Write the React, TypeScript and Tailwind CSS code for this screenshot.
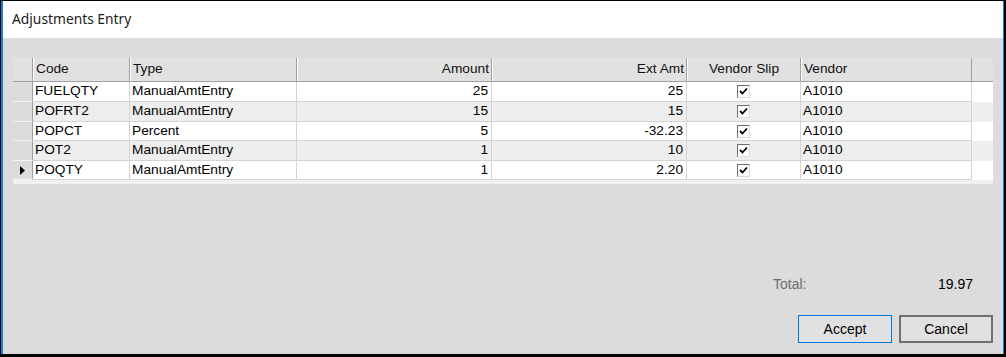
import React from "react";

const rows = [
  { code: "FUELQTY", type: "ManualAmtEntry", amount: "25", ext: "25", vendor: "A1010", h: "h-[20px]" },
  { code: "POFRT2", type: "ManualAmtEntry", amount: "15", ext: "15", vendor: "A1010", h: "h-[20px]" },
  { code: "POPCT", type: "Percent", amount: "5", ext: "-32.23", vendor: "A1010", h: "h-[19px]" },
  { code: "POT2", type: "ManualAmtEntry", amount: "1", ext: "10", vendor: "A1010", h: "h-[20px]" },
  { code: "POQTY", type: "ManualAmtEntry", amount: "1", ext: "2.20", vendor: "A1010", h: "h-[19px]" },
];

function Check() {
  return (
    <span className="inline-flex w-[13px] h-[13px] border border-t-[#6d6d6d] border-l-[#6d6d6d] border-r-[#dcdcdc] border-b-[#dcdcdc] bg-white items-center justify-center">
      <svg width="9" height="9" viewBox="0 0 9 9">
        <path d="M1 4 L3.5 6.5 L8 1.5" stroke="#000" strokeWidth="1.8" fill="none" />
      </svg>
    </span>
  );
}

export default function App() {
  const font = { fontFamily: '"Liberation Sans", Arial, sans-serif' };
  return (
    <div
      className="w-[1006px] h-[357px] flex flex-col bg-black pt-px pl-px pr-[2px] pb-[3px]"
      style={font}
    >
      <div className="flex-1 flex flex-col border-l-2 border-r border-[#1a7bd6] ">
        <div className="h-[37px] bg-white flex items-center pl-[9px]">
          <span className="text-[13.8px] text-[#1b1b1b] mt-[-1px]" style={{ fontFamily: '"Noto Sans", "Open Sans", sans-serif' }}>
            Adjustments Entry
          </span>
        </div>
        <div className="flex-1 bg-[#dcdcdc] flex flex-col pl-[10px] pr-[10px] pt-[20px] pb-[11px]">
          <div className="w-[980px] h-[126px] bg-[#f0f0f0] text-[13.7px] text-black">
            <div className="flex h-[24px] bg-[#e1e1e1] border-b border-[#a0a0a0] text-[#111]">
              <div className="w-[20px] border-r border-[#a0a0a0]" />
              <div className="w-[97px] border-r border-[#a0a0a0] border-l border-l-white pl-[2px] flex items-center">Code</div>
              <div className="w-[167px] border-r border-[#a0a0a0] border-l border-l-white pl-[2px] flex items-center">Type</div>
              <div className="w-[195px] border-r border-[#a0a0a0] border-l border-l-white pr-[2px] flex items-center justify-end">Amount</div>
              <div className="w-[195px] border-r border-[#a0a0a0] border-l border-l-white pr-[2px] flex items-center justify-end">Ext Amt</div>
              <div className="w-[114px] border-r border-[#a0a0a0] border-l border-l-white flex items-center justify-center">Vendor Slip</div>
              <div className="w-[171px] border-r border-[#a0a0a0] border-l border-l-white pl-[2px] flex items-center">Vendor</div>
            </div>
            {rows.map((r, i) => (
              <div key={r.code} className={`flex ${r.h} ${i % 2 === 1 ? "bg-[#eeeeee]" : "bg-white"}`}>
                <div className="w-[20px] bg-[#dcdcdc] border-r border-b border-r-[#a0a0a0] border-b-[#f4f4f4] flex items-center justify-center">
                  {i === 4 && (
                    <svg width="5" height="9" viewBox="0 0 5 9">
                      <path d="M0 0 L5 4.5 L0 9 Z" fill="#000" />
                    </svg>
                  )}
                </div>
                <div className="w-[97px] border-r border-b border-[#d4d4d4] pl-[2px] flex items-center">{r.code}</div>
                <div className="w-[167px] border-r border-b border-[#d4d4d4] pl-[2px] flex items-center">{r.type}</div>
                <div className="w-[195px] border-r border-b border-[#d4d4d4] pr-[3px] flex items-center justify-end">{r.amount}</div>
                <div className="w-[195px] border-r border-b border-[#d4d4d4] pr-[3px] flex items-center justify-end">{r.ext}</div>
                <div className="w-[114px] border-r border-b border-[#d4d4d4] flex items-center justify-center">
                  <Check />
                </div>
                <div className="w-[171px] border-r border-b border-[#d4d4d4] pl-[2px] flex items-center">{r.vendor}</div>
              </div>
            ))}
          </div>
          <div className="flex-1" />
          <div className="flex justify-end pr-[20px] text-[14px]">
            <div className="w-[200px] flex justify-between">
              <span className="text-[#6d6d6d]">Total:</span>
              <span className="text-black">19.97</span>
            </div>
          </div>
          <div className="flex justify-end gap-[7px] mt-[20px]">
            <button className="w-[94px] h-[28px] bg-[#e1e1e1] border border-[#0078d7] text-[14px] text-black">Accept</button>
            <button className="w-[94px] h-[28px] bg-[#e1e1e1] border-2 border-[#707070] text-[14px] text-black">Cancel</button>
          </div>
        </div>
      </div>
    </div>
  );
}
